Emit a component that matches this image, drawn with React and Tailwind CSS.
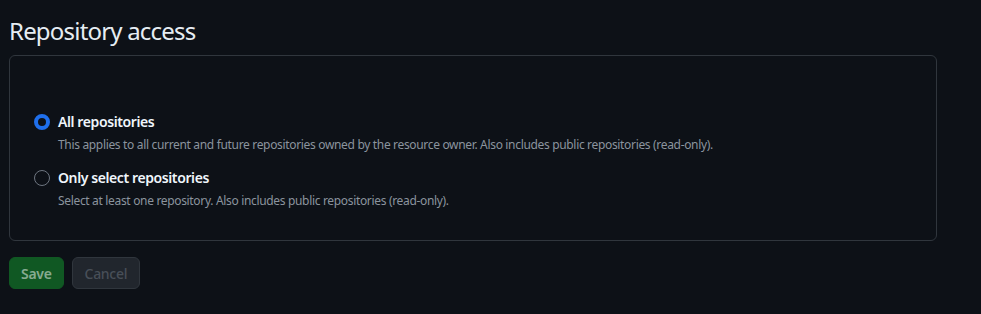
import { useState } from "react";

const options = [
  {
    id: "all",
    label: "All repositories",
    hint: "This applies to all current and future repositories owned by the resource owner. Also includes public repositories (read-only).",
  },
  {
    id: "select",
    label: "Only select repositories",
    hint: "Select at least one repository. Also includes public repositories (read-only).",
  },
];

const App = () => {
  const [access, setAccess] = useState("all");

  return (
    <div
      className="min-h-[314px] w-full bg-[#0d1117] text-[#e6edf3] pl-[9px] pr-[44px] pt-[15px]"
      style={{ fontFamily: '"Noto Sans", "Open Sans", sans-serif' }}
    >
      <h2 className="text-[24px] leading-[32px] font-normal tracking-[-0.8px] mb-[8px]">
        Repository access
      </h2>

      <div className="h-[186px] border border-[#30363d] rounded-md pl-[24px] pt-[56px] flex flex-col gap-[14px]">
        {options.map((opt) => (
          <label key={opt.id} className="flex items-start gap-[8px] cursor-pointer">
            <input
              type="radio"
              name="access"
              checked={access === opt.id}
              onChange={() => setAccess(opt.id)}
              className="appearance-none mt-[2px] w-[16px] h-[16px] rounded-full border border-[#6e7681] bg-[#0d1117] checked:border-[4px] checked:border-[#1f6feb] shrink-0"
            />
            <div className="flex flex-col">
              <span className="text-[14px] leading-[20px] font-semibold tracking-[-0.4px] text-[#f0f6fc]">
                {opt.label}
              </span>
              <span className="text-[12px] leading-[18px] tracking-[-0.33px] text-[#8b949e] mt-[4px]">
                {opt.hint}
              </span>
            </div>
          </label>
        ))}
      </div>

      <div className="flex gap-[8px] mt-[16px]">
        <button
          disabled
          className="h-[32px] px-[11px] rounded-md bg-[#105823] text-[14px] font-semibold tracking-[-0.3px] text-[#ffffff80] border border-[#105823]"
        >
          Save
        </button>
        <button
          disabled
          className="h-[32px] px-[12px] rounded-md bg-[#21262d] text-[14px] font-medium tracking-[-0.3px] text-[#484f58] border border-[#30363d]"
        >
          Cancel
        </button>
      </div>
    </div>
  );
};

export default App;
